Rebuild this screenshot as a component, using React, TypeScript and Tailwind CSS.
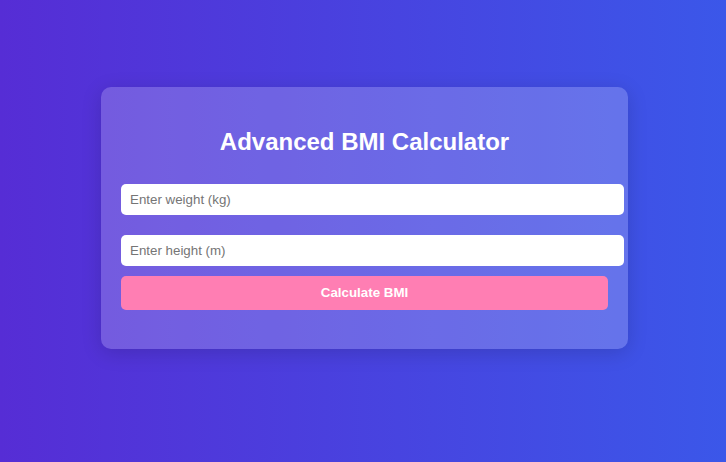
export default function App() {
  return (
    <div
      className="w-[726px] h-[462px] flex items-start justify-center pl-[3px] bg-[linear-gradient(to_right,#562dd5,#3b57e9)]"
      style={{ fontFamily: '"Liberation Sans", Arial, sans-serif' }}
    >
      <div className="mt-[87px] w-[527px] h-[262px] rounded-[10px] bg-white/20 p-[20px] shadow-[0_4px_20px_rgba(0,0,0,0.15)]">
        <h2 className="mt-[21px] text-center text-[24px] font-bold leading-[28px] text-white">
          Advanced BMI Calculator
        </h2>
        <input
          placeholder="Enter weight (kg)"
          className="mt-[28px] block w-[503px] h-[31px] rounded-[5px] bg-white px-[9px] text-[13.33px] text-black outline-none placeholder:text-[#757575]"
        />
        <input
          placeholder="Enter height (m)"
          className="mt-[20px] block w-[503px] h-[31px] rounded-[5px] bg-white px-[9px] text-[13.33px] text-black outline-none placeholder:text-[#757575]"
        />
        <button className="mt-[10px] block w-[487px] h-[34px] rounded-[5px] bg-[#ff7eb3] text-[13.33px] font-bold text-white">
          Calculate BMI
        </button>
      </div>
    </div>
  );
}
